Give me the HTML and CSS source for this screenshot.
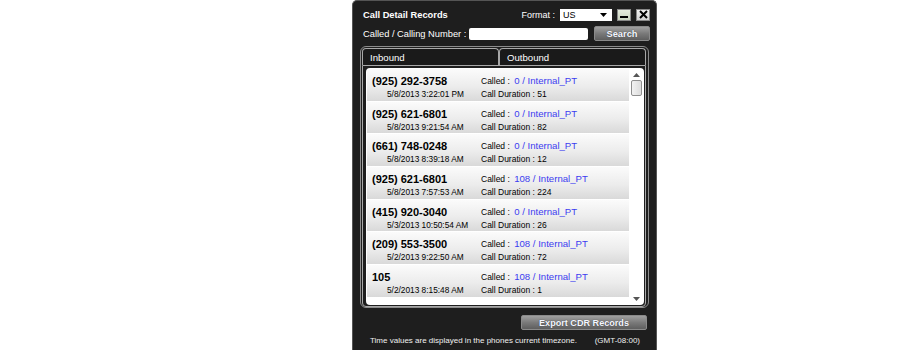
FILE: index.html
```html
<!DOCTYPE html>
<html lang="en">
<head>
  <meta charset="UTF-8">
  <title>Call Detail Records</title>
  <link rel="stylesheet" href="styles.css">
</head>
<body>

  <div class="cdr-window">
    <div class="top-row">
      <span class="title">Call Detail Records</span>
      <span class="format-label">Format :</span>
      <div class="format-select">
        <span>US</span>
        <svg class="caret" width="7" height="4" viewBox="0 0 7 4"><path d="M0 0h7L3.5 4z" fill="#000"/></svg>
      </div>
      <button class="win-btn min-btn"><span class="min-bar"></span></button>
      <button class="win-btn close-btn">
        <svg width="9" height="9" viewBox="0 0 9 9"><path d="M1 1L8 8M8 1L1 8" stroke="#000" stroke-width="2"/></svg>
      </button>
    </div>

    <div class="search-row">
      <span class="search-label">Called / Calling Number :</span>
      <input type="text" class="search-input">
      <button class="gray-btn search-btn">Search</button>
    </div>

    <div class="tab-panel">
      <div class="tabs">
        <div class="tab tab-inbound">Inbound</div>
        <div class="tab tab-outbound">Outbound</div>
      </div>
      <div class="tab-body">
        <div class="list">
          <div class="rows">
            <div class="row">
              <div class="col-left"><div class="phone">(925) 292-3758</div><div class="date">5/8/2013 3:22:01 PM</div></div>
              <div class="col-right"><div class="called">Called : <span class="ext">0 / Internal_PT</span></div><div class="dur">Call Duration : 51</div></div>
            </div>
            <div class="row">
              <div class="col-left"><div class="phone">(925) 621-6801</div><div class="date">5/8/2013 9:21:54 AM</div></div>
              <div class="col-right"><div class="called">Called : <span class="ext">0 / Internal_PT</span></div><div class="dur">Call Duration : 82</div></div>
            </div>
            <div class="row">
              <div class="col-left"><div class="phone">(661) 748-0248</div><div class="date">5/8/2013 8:39:18 AM</div></div>
              <div class="col-right"><div class="called">Called : <span class="ext">0 / Internal_PT</span></div><div class="dur">Call Duration : 12</div></div>
            </div>
            <div class="row">
              <div class="col-left"><div class="phone">(925) 621-6801</div><div class="date">5/8/2013 7:57:53 AM</div></div>
              <div class="col-right"><div class="called">Called : <span class="ext">108 / Internal_PT</span></div><div class="dur">Call Duration : 224</div></div>
            </div>
            <div class="row">
              <div class="col-left"><div class="phone">(415) 920-3040</div><div class="date">5/3/2013 10:50:54 AM</div></div>
              <div class="col-right"><div class="called">Called : <span class="ext">0 / Internal_PT</span></div><div class="dur">Call Duration : 26</div></div>
            </div>
            <div class="row">
              <div class="col-left"><div class="phone">(209) 553-3500</div><div class="date">5/2/2013 9:22:50 AM</div></div>
              <div class="col-right"><div class="called">Called : <span class="ext">108 / Internal_PT</span></div><div class="dur">Call Duration : 72</div></div>
            </div>
            <div class="row">
              <div class="col-left"><div class="phone">105</div><div class="date">5/2/2013 8:15:48 AM</div></div>
              <div class="col-right"><div class="called">Called : <span class="ext">108 / Internal_PT</span></div><div class="dur">Call Duration : 1</div></div>
            </div>
          </div>
          <div class="scrollbar">
            <svg class="arrow" width="7" height="4" viewBox="0 0 7 4"><path d="M3.5 0L7 4H0z" fill="#555"/></svg>
            <div class="thumb"></div>
            <div class="track"></div>
            <svg class="arrow" width="7" height="4" viewBox="0 0 7 4"><path d="M0 0h7L3.5 4z" fill="#555"/></svg>
          </div>
        </div>
      </div>
    </div>

    <div class="export-row">
      <button class="gray-btn export-btn">Export CDR Records</button>
    </div>

    <div class="footer">
      <span>Time values are displayed in the phones current timezone.</span>
      <span>(GMT-08:00)</span>
    </div>
  </div>

</body>
</html>
```

FILE: styles.css
```css
body {
  margin: 0;
  padding: 0;
  background-color: #fff;
  font-family: 'Liberation Sans', Arial, sans-serif;
}

.cdr-window {
  box-sizing: border-box;
  width: 305px;
  height: 350px;
  margin-left: 352px;
  padding: 8px 6px 0 7px;
  background-color: #1e1e1e;
  border: 1px solid #555;
  border-bottom: none;
  border-radius: 5px 5px 0 0;
  color: #fff;
}

/* Header rows */
.top-row {
  display: flex;
  align-items: center;
  height: 11px;
  padding-left: 3px;
}

.title {
  font-size: 9.3px;
  font-weight: bold;
  flex: 1;
}

.format-label {
  font-size: 9px;
  margin-right: 5px;
}

.format-select {
  box-sizing: border-box;
  width: 52px;
  height: 12px;
  background-color: #fff;
  color: #000;
  font-size: 9px;
  display: flex;
  align-items: center;
  justify-content: space-between;
  padding: 0 5px 0 3px;
  margin-right: 5px;
}

.win-btn {
  box-sizing: border-box;
  width: 14px;
  height: 12px;
  padding: 0;
  border: 1px solid #888;
  display: flex;
  align-items: center;
  justify-content: center;
}

.min-btn {
  background: linear-gradient(#e4ebdc, #c9d3bf);
  margin-right: 5px;
  align-items: flex-end;
  padding-bottom: 2px;
}

.min-bar {
  width: 8px;
  height: 2px;
  background-color: #000;
}

.close-btn {
  background: linear-gradient(#f0f0f0, #d2d2d2);
}

.search-row {
  display: flex;
  align-items: center;
  height: 15px;
  margin-top: 6px;
  padding-left: 3px;
}

.search-label {
  font-size: 9.3px;
  width: 106px;
}

.search-input {
  box-sizing: border-box;
  width: 119px;
  height: 12px;
  border: none;
  border-radius: 2px;
  background-color: #fff;
  margin: 0 6px 0 0;
  padding: 0;
}

.gray-btn {
  box-sizing: border-box;
  border: 1px solid #8a8a8a;
  border-radius: 2px;
  background: linear-gradient(#a0a0a0, #7a7a7a 50%, #5e5e5e);
  color: #f4f6ff;
  font-family: 'Liberation Sans', Arial, sans-serif;
  font-weight: bold;
  padding: 0;
  text-shadow: 0 0 1px #333;
}

.search-btn {
  width: 56px;
  height: 15px;
  font-size: 9.3px;
}

/* Tabs */
.tab-panel {
  box-sizing: border-box;
  width: 289px;
  height: 262px;
  margin-top: 5px;
  padding: 1px 2px 1px 1px;
  border: 1px solid #8c8c8c;
  border-radius: 6px;
}

.tabs {
  display: flex;
  height: 17px;
}

.tab {
  box-sizing: border-box;
  height: 17px;
  border: 1px solid #a8a8a8;
  border-bottom: none;
  border-radius: 4px 4px 0 0;
  font-size: 9.6px;
  line-height: 14px;
  padding: 2px 0 0 7px;
  background-color: #1a1a1a;
}

.tab-inbound {
  width: 137px;
}

.tab-outbound {
  width: 147px;
}

.tab-body {
  box-sizing: border-box;
  height: 242px;
  border: 1px solid #a8a8a8;
  border-radius: 0 0 4px 4px;
  padding: 2px 1px 1px 3px;
}

.list {
  display: flex;
  height: 237px;
  background-color: #fff;
  border-radius: 4px;
  padding: 1px 0 0 1px;
  box-sizing: border-box;
  overflow: hidden;
}

.rows {
  width: 262px;
}

.row {
  display: flex;
  height: 31.7px;
  margin-bottom: 1px;
  background: linear-gradient(#fbfbfb, #ececec 55%, #d9d9d9);
  color: #000;
}

.col-left {
  width: 109px;
  padding: 6px 0 0 5px;
}

.col-right {
  padding-top: 6px;
}

.phone {
  font-size: 11px;
  font-weight: bold;
  line-height: 12px;
  height: 12px;
}

.date {
  font-size: 8.3px;
  line-height: 14px;
  padding-left: 15px;
}

.called {
  font-size: 8.5px;
  line-height: 12px;
  height: 12px;
}

.ext {
  font-size: 9.6px;
  color: #3c3cf0;
  margin-left: 2px;
}

.dur {
  font-size: 8.5px;
  line-height: 14px;
}

/* Scrollbar */
.scrollbar {
  width: 14px;
  display: flex;
  flex-direction: column;
  align-items: center;
  padding-top: 4px;
  padding-bottom: 4px;
  box-sizing: border-box;
}

.thumb {
  box-sizing: border-box;
  width: 11px;
  height: 16px;
  margin-top: 3px;
  border: 1px solid #8e8e8e;
  border-radius: 2px;
  background: linear-gradient(to right, #f2f2f2, #dcdcdc);
}

.track {
  flex: 1;
}

/* Bottom */
.export-row {
  display: flex;
  justify-content: flex-end;
  margin-top: 7px;
  padding-right: 3px;
}

.export-btn {
  width: 126px;
  height: 15px;
  font-size: 9.1px;
}

.footer {
  display: flex;
  justify-content: space-between;
  margin-top: 5px;
  padding: 0 10px 0 10px;
  font-size: 8px;
  line-height: 12px;
  color: #f0f0f0;
}
```
